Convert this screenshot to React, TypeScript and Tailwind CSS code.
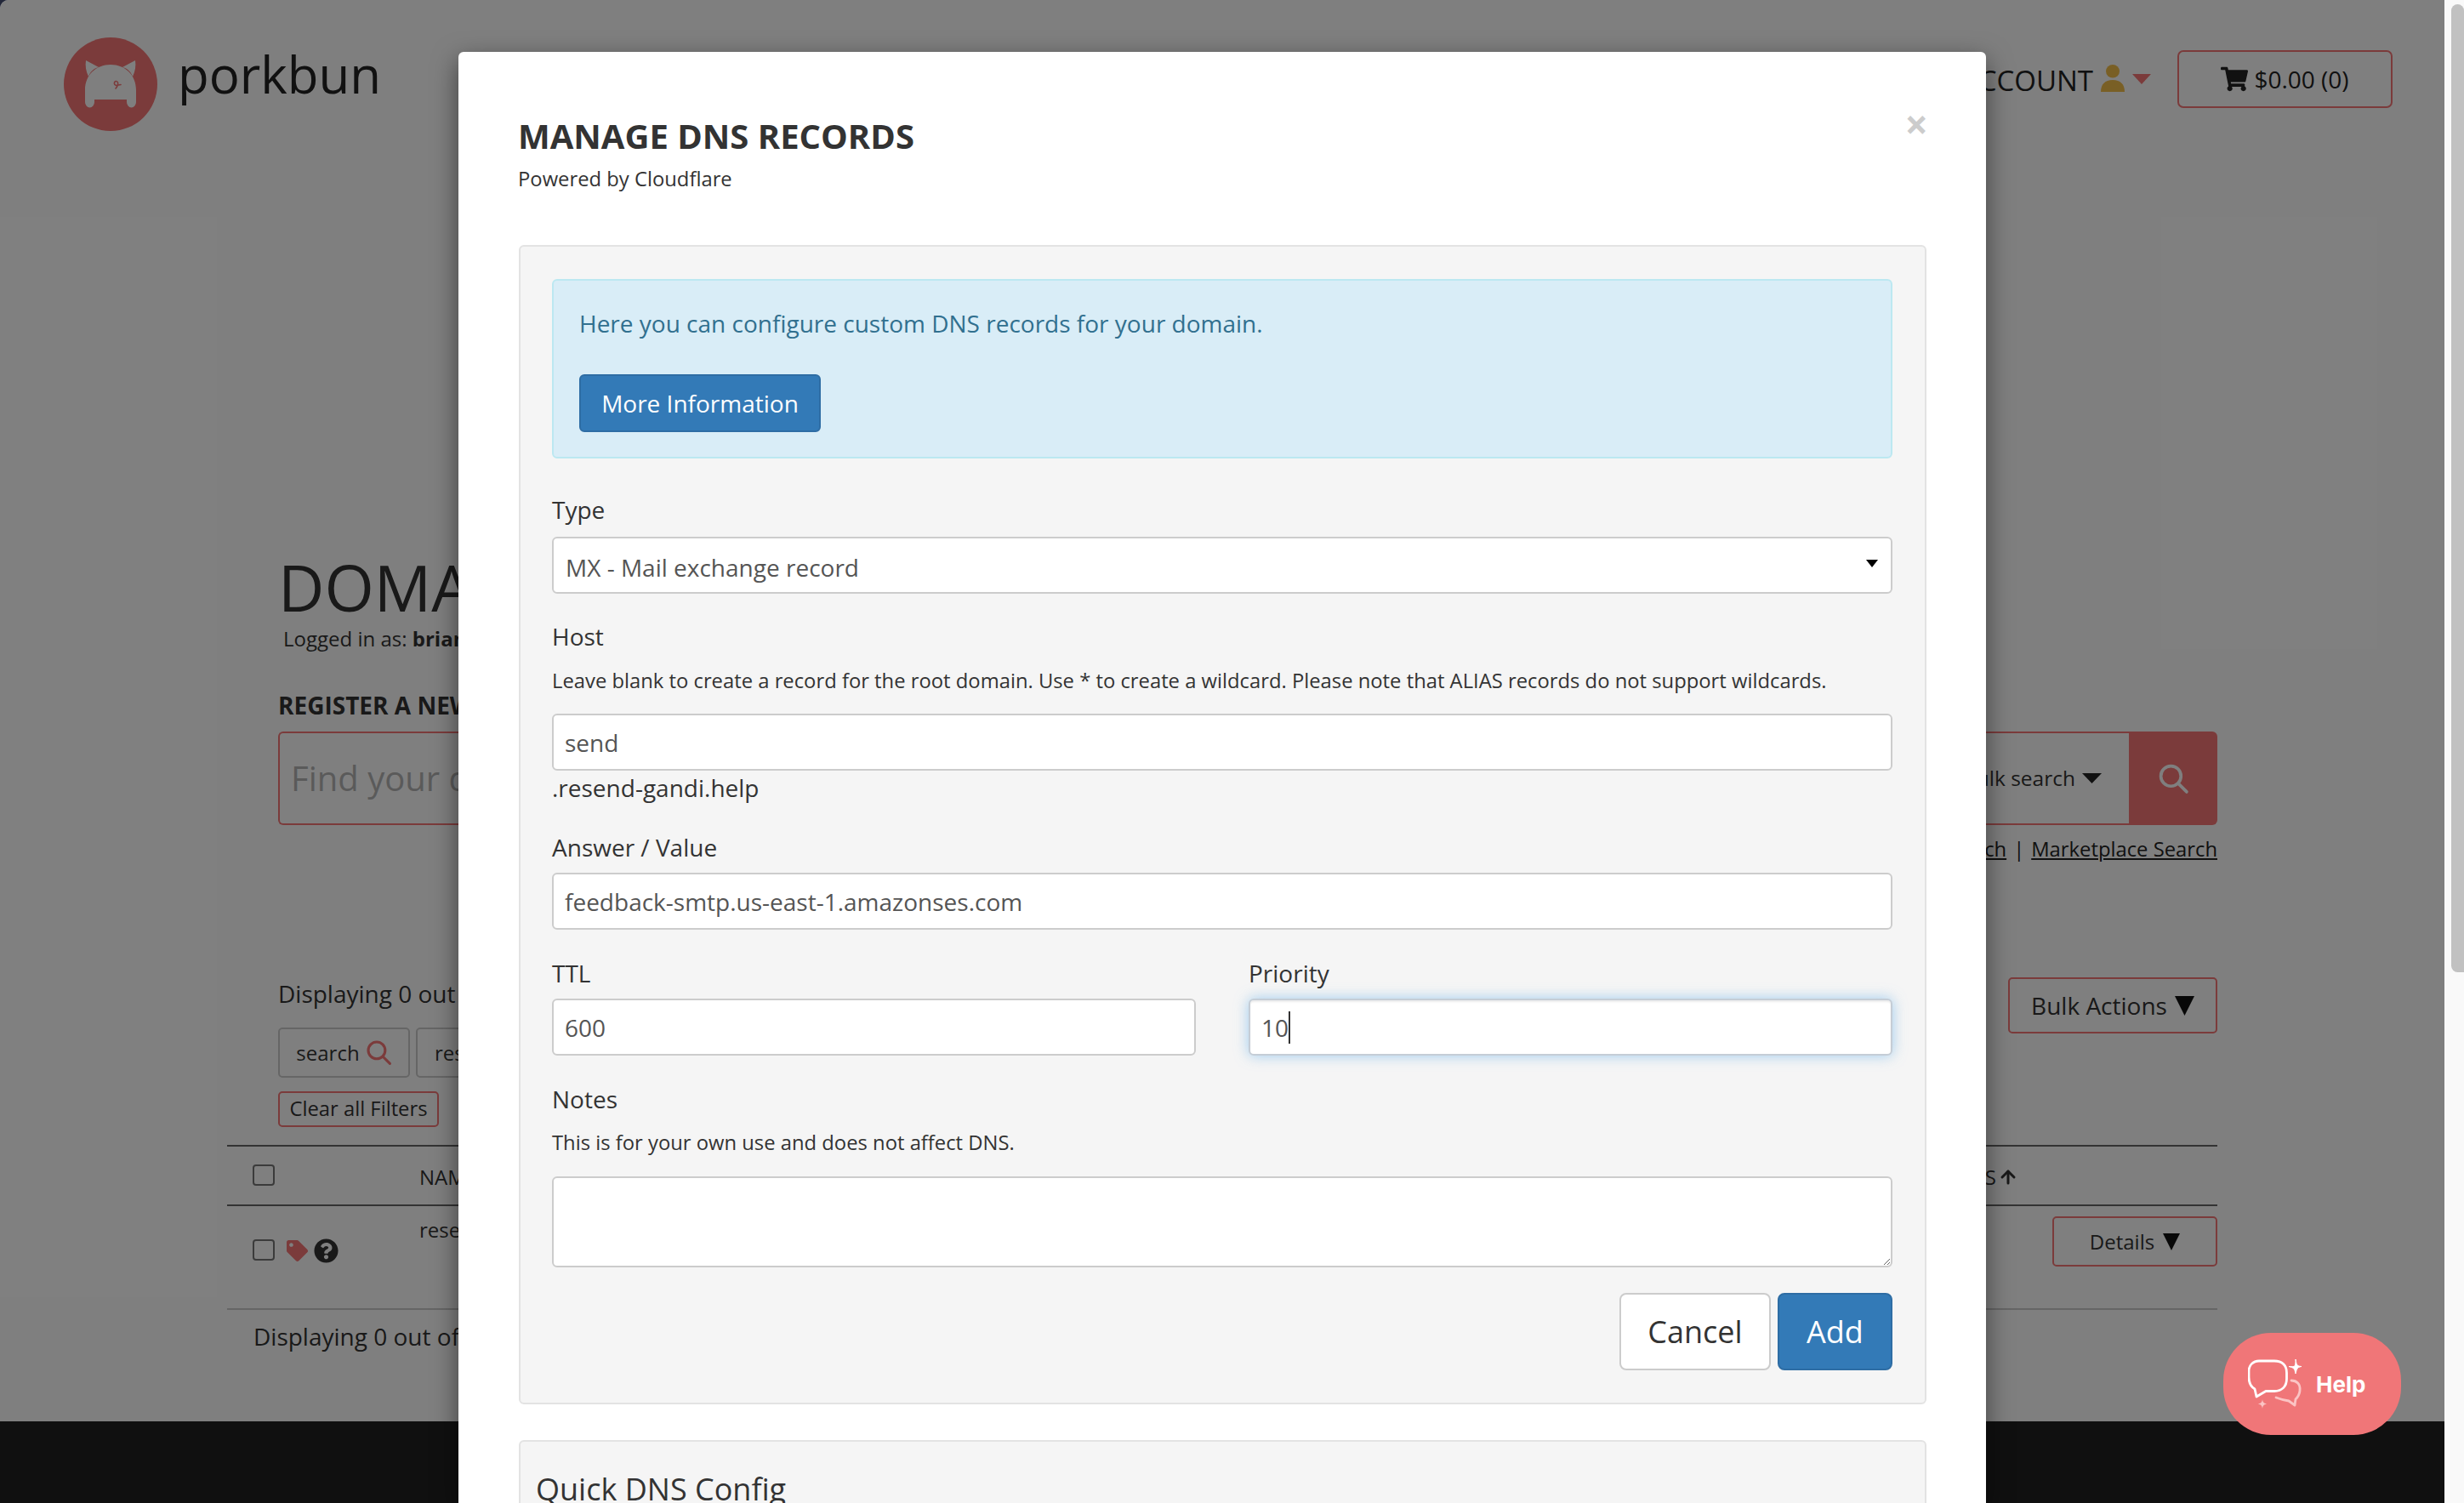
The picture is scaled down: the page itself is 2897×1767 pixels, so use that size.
import React from 'react';
import { FaShoppingCart, FaQuestionCircle, FaTag } from 'react-icons/fa';
import { ArrowUp } from 'lucide-react';

const Caret = ({ className }: { className: string }) => (
  <svg viewBox="0 0 24 14" preserveAspectRatio="none" className={className}>
    <path d="M0 0 H24 L12 14 Z" fill="currentColor" />
  </svg>
);

const SearchIcon = ({ className }: { className: string }) => (
  <svg viewBox="0 0 36 36" fill="none" stroke="currentColor" strokeWidth="3.6" className={className}>
    <circle cx="15" cy="15" r="11.5" />
    <path d="M23.5 23.5 L33 33" strokeLinecap="round" />
  </svg>
);

const Logo = () => (
  <svg viewBox="0 0 120 120" className="w-[120px] h-[120px] -ml-[5px] -mt-[4px] flex-none">
    <circle cx="60" cy="59" r="55" fill="#f67676" />
    <path d="M30 80 V66 C30 48 43 36 60 36 S90 48 90 66 V80 a5.5 6.5 0 0 1 -11 0 V77 H41 V80 a5.5 6.5 0 0 1 -11 0 Z" fill="#fff" />
    <path d="M31 31 L46 39 C39 41 36 45 34 50 C31 44 30 37 31 31 Z M89 31 L74 39 C81 41 84 45 86 50 C89 44 90 37 89 31 Z" fill="#fff" />
    <path d="M72 59.5 L66.5 60.5 C64 60 63.5 56.5 66 55.5 C69 55 69.5 59 67.5 62 L66 64" fill="none" stroke="#f67676" strokeWidth="1.6" strokeLinecap="round" />
  </svg>
);

const UserIcon = () => (
  <svg viewBox="0 0 28 32" className="w-[28px] h-[32px] flex-none">
    <ellipse cx="14" cy="7.8" rx="8" ry="7.8" fill="#f2b736" opacity="0.9" />
    <path d="M0 32 C0 23 5 18 14 18 S28 23 28 32 Z" fill="#f2b736" opacity="0.9" />
  </svg>
);

const HelpIcon = () => (
  <svg viewBox="0 0 70 70" className="w-[70px] h-[70px] flex-none" fill="none">
    <path d="M13 3 H31 C40 3 45.5 8 45.5 17 V24 C45.5 33 40 38.5 31 38.5 H21 L10 45 L8 36 C3 33 1 28 1 22 V15 C1 8 6 3 13 3 Z" stroke="#fff" strokeWidth="2.8" strokeLinejoin="round" />
    <path d="M55 9 C56 7 56 4 56 1 C56.5 4 57 7 58 8 C59 9 62 9.5 63 9.5 C60 10 59 10.5 58 12 C57 13.5 56.5 16 56 18 C55.5 16 55 13 54 12 C53 11 50 10 48 9.5 C51 9.5 54 10 55 9 Z" fill="#fff" stroke="#fff" strokeWidth="1" />
    <path d="M51 26 C57 26 62 30 61 38 C60.5 43 58 46 56 48 L55 55 L48 50 C42 49 38 48 33 46" stroke="#fbc4c4" strokeWidth="2.8" strokeLinecap="round" strokeLinejoin="round" />
    <path d="M17 48 C17.4 51 18 52.5 22 53.5 C18 54.5 17.5 56 17 59 C16.5 56 16 54.5 12 53.5 C16 52.5 16.6 51 17 48 Z" fill="#fbc4c4" />
  </svg>
);

const fieldClass = "block w-full h-[67px] border-2 border-[#cccccc] rounded-[6px] bg-white px-[13px] text-[28px] text-[#555555] outline-none";

const BackgroundPage = () => (
  <div className="flex flex-col h-full bg-white text-[#333333]">
    {/* top bar */}
    <div className="flex justify-between pl-[75px] pr-[61px] h-[160px] pt-[44px] flex-none">
      <div className="flex items-start">
        <Logo />
        <span className="ml-[19px] mt-[-2px] text-[60px] leading-[90px] text-[#222222]">porkbun</span>
      </div>
      <div className="flex items-start pt-[15px]">
        <div className="flex items-center h-[72px] text-[33px] text-[#222222]">
          <span>ACCOUNT</span>
          <span className="ml-[9px] mb-[6px]"><UserIcon /></span>
          <Caret className="ml-[9px] mb-[4px] w-[22px] h-[12px] text-[#f67676]" />
        </div>
        <div className="ml-[31px] w-[253px] h-[68px] border-2 border-[#f67676] rounded-[7px] flex items-center justify-center text-[#222222]">
          <FaShoppingCart className="text-[32px] mr-[7px]" />
          <span className="text-[28px]">$0.00 (0)</span>
        </div>
      </div>
    </div>

    {/* domain section */}
    <div className="ml-[267px] w-[2340px] flex-none">
      <div className="pl-[60px]">
        <div className="mt-[490px] text-[75px] leading-[80px] text-[#333333]">DOMAINS</div>
        <div className="mt-[4px] ml-[6px] text-[24px] leading-[34px]">Logged in as: <b>brian</b></div>
        <div className="mt-[43px] text-[28px] leading-[36px] font-bold">REGISTER A NEW</div>
        <div className="mt-[13px] flex h-[110px]">
          <div className="flex-1 flex items-center justify-between border-2 border-r-0 border-[#f67676] rounded-l-[6px] pl-[13px] pr-[32px]">
            <span className="text-[40px] text-[#b5b5b5]">Find your domain</span>
            <span className="flex items-center text-[24.5px]">Bulk search<Caret className="ml-[8px] w-[23px] h-[12px] text-[#222222]" /></span>
          </div>
          <div className="w-[104px] flex items-center justify-center bg-[#f67676] rounded-r-[6px]">
            <SearchIcon className="w-[37px] h-[37px] text-white" />
          </div>
        </div>
        <div className="mt-[11px] flex justify-end text-[23.8px] leading-[34px] text-[#222222]">
          <span className="underline">Search</span>
          <span className="mx-[8px]">|</span>
          <span className="underline">Marketplace Search</span>
        </div>
        <div className="mt-[134px] flex justify-between items-start">
          <div>
            <div className="text-[28px] leading-[38px]">Displaying 0 out of 1</div>
            <div className="mt-[21px] flex gap-[7px]">
              <div className="w-[155px] h-[59px] border-2 border-[#cccccc] rounded-[5px] flex items-center justify-center text-[24px]">
                search<SearchIcon className="ml-[7px] w-[31px] h-[31px] text-[#f67676]" />
              </div>
              <div className="w-[155px] h-[59px] border-2 border-[#cccccc] rounded-[5px] flex items-center pl-[20px] text-[24px]">resend</div>
            </div>
            <div className="mt-[16px] w-[189px] h-[42px] border-2 border-[#f67676] rounded-[5px] flex items-center justify-center text-[23.8px] whitespace-nowrap">Clear all Filters</div>
          </div>
          <div className="w-[246px] h-[66px] border-2 border-[#f67676] rounded-[5px] flex items-center justify-center text-[28px]">
            Bulk Actions<Caret className="ml-[9px] w-[23px] h-[23px] text-[#111111]" />
          </div>
        </div>
      </div>

      {/* table */}
      <div className="mt-[21px] border-t-2 border-[#666666]">
        <div className="h-[70px] flex items-center border-b-2 border-[#666666] pl-[30px]">
          <div className="w-[26px] h-[25px] border-2 border-[#777777] rounded-[4px] bg-white -mt-[2px]" />
          <span className="ml-[170px] mt-[3px] text-[24px]">NAME</span>
          <span className="ml-auto mt-[3px] mr-[234px] flex items-center text-[24px]">STATUS<ArrowUp className="w-[24px] h-[24px] ml-[2px]" strokeWidth={3} /></span>
        </div>
        <div className="h-[122px] flex items-start border-b-2 border-[#cccccc] pl-[30px]">
          <div className="mt-[39px] w-[26px] h-[25px] border-2 border-[#777777] rounded-[4px] bg-white flex-none" />
          <FaTag className="mt-[40px] ml-[14px] w-[25px] h-[25px] text-[#f67676] flex-none" />
          <FaQuestionCircle className="mt-[38px] ml-[7px] w-[29px] h-[29px] text-[#333333] flex-none" />
          <span className="mt-[10px] ml-[95px] text-[24px] leading-[36px]">resend-gandi.help</span>
          <div className="ml-auto mt-[12px] w-[194px] h-[59px] border-2 border-[#f67676] rounded-[5px] flex items-center justify-center text-[24px]">
            Details<Caret className="ml-[10px] w-[20px] h-[20px] text-[#111111]" />
          </div>
        </div>
        <div className="mt-[12px] ml-[31px] text-[28px] leading-[38px]">Displaying 0 out of 1</div>
      </div>
    </div>

    <div className="mt-auto h-[96px] bg-[#202020] flex-none" />
  </div>
);

const Modal = () => (
  <div className="absolute left-[539px] top-[61px] w-[1796px] h-[1706px] bg-white rounded-t-[6px] shadow-[0_10px_30px_rgba(0,0,0,0.5)] overflow-hidden pl-[71px] pr-[70px] text-[#333333]">
    <div className="flex justify-between pt-[75px]">
      <div>
        <h4 className="-ml-[1px] text-[40px] leading-[48px] font-bold">MANAGE DNS RECORDS</h4>
        <p className="mt-[9px] -ml-[1px] text-[23.8px] leading-[34px]">Powered by Cloudflare</p>
      </div>
      <span className="-mt-[14px] -mr-[2px] text-[48px] leading-[48px] font-bold text-[#cccccc]">×</span>
    </div>

    <div className="mt-[61px] border-2 border-[#e3e3e3] rounded-[6px] bg-[#f5f5f5] pl-[37px] pr-[38px] py-[38px]">
      <div className="h-[211px] border-2 border-[#bce8f1] rounded-[6px] bg-[#d9edf7] px-[30px] pt-[30px]">
        <p className="text-[28px] leading-[40px] text-[#31708f]">Here you can configure custom DNS records for your domain.</p>
        <button className="mt-[40px] h-[68px] w-[284px] border-2 border-[#2e6da4] rounded-[6px] bg-[#337ab7] text-[28px] text-white">More Information</button>
      </div>

      <label className="block mt-[40px] text-[28px] leading-[40px]">Type</label>
      <div className="mt-[12px] h-[67px] border-2 border-[#cccccc] rounded-[6px] bg-white pl-[14px] pr-[15px] pt-[4px] flex items-center justify-between text-[28px] text-[#555555]">
        <span>MX - Mail exchange record</span>
        <svg viewBox="0 0 14 9" className="w-[14px] h-[9px] -mt-[8px]"><path d="M0 0 H14 L7 9 Z" fill="#000" /></svg>
      </div>

      <label className="block mt-[30px] text-[28px] leading-[40px]">Host</label>
      <p className="mt-[14px] text-[23.8px] leading-[36px]">Leave blank to create a record for the root domain. Use * to create a wildcard. Please note that ALIAS records do not support wildcards.</p>
      <input readOnly value="send" className={`mt-[21px] ${fieldClass}`} />
      <div className="text-[28px] leading-[40px]">.resend-gandi.help</div>

      <label className="block mt-[30px] text-[28px] leading-[40px]">Answer / Value</label>
      <input readOnly value="feedback-smtp.us-east-1.amazonses.com" className={`mt-[10px] pt-[1px] ${fieldClass}`} />

      <div className="mt-[31px] grid grid-cols-2 gap-x-[62px]">
        <div>
          <label className="block text-[28px] leading-[40px]">TTL</label>
          <input readOnly value="600" className={`mt-[10px] pt-[1px] ${fieldClass}`} />
        </div>
        <div>
          <label className="block text-[28px] leading-[40px]">Priority</label>
          <div className="mt-[10px] h-[67px] border-2 border-[#c5cdd6] rounded-[6px] bg-white pl-[13px] flex items-center text-[28px] text-[#555555] shadow-[0_0_16px_rgba(102,175,233,0.6),inset_0_2px_2px_rgba(0,0,0,0.08)]">
            10<span className="w-[2px] h-[38px] bg-[#333333]" />
          </div>
        </div>
      </div>

      <label className="block mt-[31px] text-[28px] leading-[40px]">Notes</label>
      <p className="mt-[13px] text-[23.8px] leading-[36px]">This is for your own use and does not affect DNS.</p>
      <textarea readOnly className="mt-[22px] block w-full h-[107px] border-2 border-[#cccccc] rounded-[6px] bg-white outline-none resize" />

      <div className="mt-[30px] flex justify-end gap-[8px]">
        <button className="w-[178px] h-[91px] border-2 border-[#cccccc] rounded-[8px] bg-white text-[36px]">Cancel</button>
        <button className="w-[135px] h-[91px] border-2 border-[#2e6da4] rounded-[8px] bg-[#337ab7] text-[36px] text-white">Add</button>
      </div>
    </div>

    <div className="mt-[42px] h-[200px] border-2 border-[#e3e3e3] rounded-[6px] bg-[#f5f5f5] pl-[18px] pt-[31px]">
      <h4 className="text-[36px] leading-[50px]">Quick DNS Config</h4>
    </div>
  </div>
);

export default function App() {
  return (
    <div className="w-[2897px] h-[1767px] flex overflow-hidden bg-[#23283a] font-['Open_Sans',sans-serif]">
      <div className="relative w-[2874px] h-full overflow-hidden rounded-tl-[10px]">
        <BackgroundPage />
        <div className="absolute inset-0 bg-black/50" />
        <Modal />
        {/* help launcher */}
        <div className="absolute left-[2614px] top-[1567px] w-[209px] h-[120px] rounded-[56px] bg-[#f07678] flex items-center pl-[29px] font-['Inter',sans-serif]">
          <span className="mt-[10px]"><HelpIcon /></span>
          <span className="ml-[10px] text-[26px] font-bold text-white">Help</span>
        </div>
      </div>
      <div className="w-[23px] h-full bg-[#f9f9f9] flex-none">
        <div className="ml-[8px] mt-[5px] w-[15px] h-[1138px] rounded-l-[8px] rounded-tr-[8px] bg-[#c1c1c1]" />
      </div>
    </div>
  );
}
